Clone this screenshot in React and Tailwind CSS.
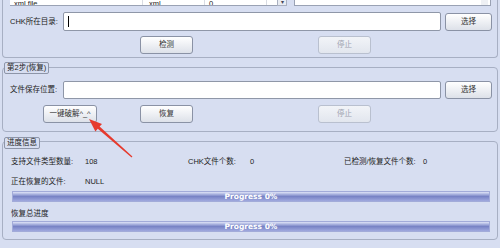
import React from "react";

const font = { fontFamily: '"Liberation Sans", "Noto Sans CJK SC", sans-serif' };

function Btn({ children, disabled, className = "" }) {
  return (
    <div
      className={
        "h-[18px] flex items-center justify-center rounded-[3px] border text-[7.5px] " +
        (disabled
          ? "border-[#b9c0cf] bg-gradient-to-b from-[#f2f4f8] to-[#e2e6ee] text-[#9ea4b1] "
          : "border-[#8a92a5] bg-gradient-to-b from-[#ffffff] to-[#dde1e9] text-[#333] ") +
        className
      }
    >
      {children}
    </div>
  );
}

function Legend({ text, className = "" }) {
  return (
    <div
      className={
        "absolute left-[1px] h-[12px] px-[2px] flex items-center border border-[#8d95a8] rounded-[2px] bg-[#d7def1] text-[7.5px] text-[#222] " +
        className
      }
    >
      {text}
    </div>
  );
}

function Progress() {
  return (
    <div className="ml-[9px] w-[478px] h-[11px] border border-[#a2abd9] flex items-center justify-center bg-gradient-to-b from-[#dfe3f7] via-[#7883c5] to-[#a0a9de]">
      <span
        className="text-[7.5px] font-bold text-white leading-none"
        style={{ fontFamily: '"DejaVu Sans", sans-serif' }}
      >
        Progress 0%
      </span>
    </div>
  );
}

export default function App() {
  return (
    <div
      className="relative w-[500px] h-[248px] overflow-hidden bg-[#d7def1] text-[#222]"
      style={font}
    >
      {/* step 1 (cut off at the top) */}
      <div className="ml-[2px] w-[496px] h-[58px] border-x border-b border-[#a7afc3] rounded-b-[4px] flex flex-col">
        <div className="h-[6px] flex pl-[7px] overflow-hidden">
          <div className="w-[267px] h-[6px] bg-white border-b border-[#9aa2b4] flex items-end overflow-hidden text-[7.5px]">
            <div className="w-[133px] h-[12px] pl-[2px] border-r border-[#d9dce3] leading-[12px] -mb-[5px]">.xml file</div>
            <div className="w-[62px] h-[12px] pl-[4px] border-r border-[#d9dce3] leading-[12px] -mb-[5px]">.xml</div>
            <div className="w-[62px] h-[12px] pl-[4px] border-r border-[#d9dce3] leading-[12px] -mb-[5px]">0</div>
          </div>
          <div className="w-[10px] h-[6px] bg-[#e9ecf2] border border-t-0 border-[#a9b0c0] flex items-end justify-center">
            <span className="text-[6px] leading-[6px] text-[#445]">▾</span>
          </div>
          <div className="ml-[7px] w-[197px] h-[6px] bg-white border-x border-b border-[#9aa2b4] flex justify-end pr-[2px]">
            <div className="w-[7px] h-[5px] bg-[#eef0f4]" />
          </div>
        </div>
        <div className="mt-[6px] h-[19px] flex items-center pl-[7px]">
          <div className="w-[53px] text-[7.5px]">CHK所在目录:</div>
          <div className="w-[378px] h-[19px] bg-white border border-[#8f97a8] rounded-[2px] flex items-center pl-[4px]">
            <div className="w-px h-[11px] bg-black" />
          </div>
          <Btn className="ml-[4px] w-[47px] h-[16px]">选择</Btn>
        </div>
        <div className="mt-[5px] flex pl-[137px]">
          <Btn className="w-[53px]">检测</Btn>
          <Btn disabled className="ml-[125px] w-[53px]">停止</Btn>
        </div>
      </div>

      {/* step 2 */}
      <div className="relative mt-[9px] ml-[2px] w-[496px] h-[65px] border border-[#a7afc3] rounded-[4px]">
        <Legend text="第2步(恢复)" className="-top-[6px]" />
        <div className="pt-[13px] h-[31px] flex items-center pl-[7px]">
          <div className="w-[53px] text-[7.5px]">文件保存位置:</div>
          <div className="w-[378px] h-[18px] bg-white border border-[#8f97a8] rounded-[2px]" />
          <Btn className="ml-[4px] w-[47px] h-[16px]">选择</Btn>
        </div>
        <div className="mt-[6px] flex pl-[40px]">
          <Btn className="w-[54px]">一键破解^_^</Btn>
          <Btn className="ml-[43px] w-[53px]">恢复</Btn>
          <Btn disabled className="ml-[125px] w-[53px]">停止</Btn>
        </div>
      </div>

      {/* progress info */}
      <div className="relative mt-[9px] ml-[2px] w-[496px] h-[99px] border border-[#a7afc3] rounded-[4px] text-[7.5px]">
        <Legend text="进度信息" className="-top-[5px]" />
        <div className="pt-[14px] pl-[8px] flex h-[26px] items-center leading-[12px]">
          <span className="w-[74px]">支持文件类型数量:</span>
          <span className="w-[103px]">108</span>
          <span className="w-[62px]">CHK文件个数:</span>
          <span className="w-[94px]">0</span>
          <span className="w-[79px]">已检测/恢复文件个数:</span>
          <span>0</span>
        </div>
        <div className="mt-[8px] pl-[8px] flex h-[12px] items-center">
          <span className="w-[74px]">正在恢复的文件:</span>
          <span>NULL</span>
        </div>
        <div className="mt-[3px]">
          <Progress />
        </div>
        <div className="mt-[6px] pl-[8px] h-[12px] flex items-center">恢复总进度</div>
        <div className="mt-[1px]">
          <Progress />
        </div>
      </div>

      {/* red arrow annotation */}
      <svg className="absolute left-0 top-0 pointer-events-none" width="500" height="248">
        <polygon
          fill="#e63a2e"
          points="89,119 102,123.9 99.6,126.6 132.4,156.6 131.6,157.4 97.8,128.7 95.4,131.4"
        />
      </svg>
    </div>
  );
}
